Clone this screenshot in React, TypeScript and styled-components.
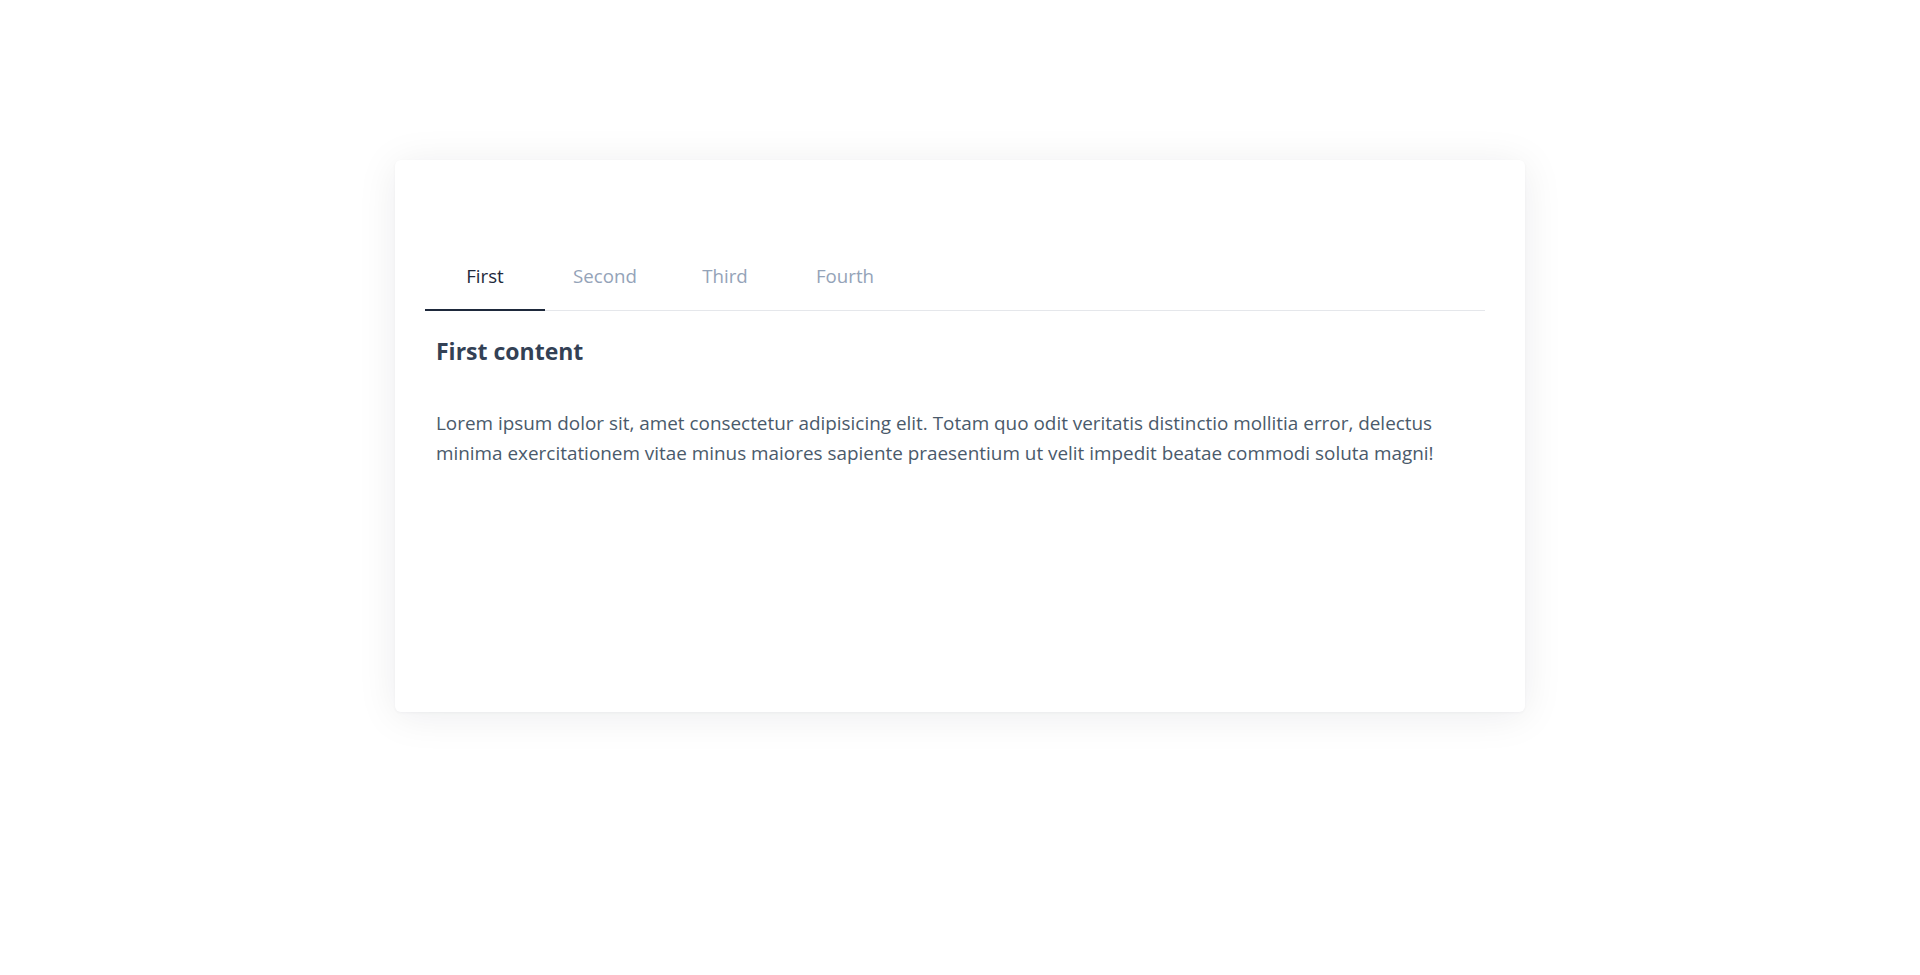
import React, { useState } from "react";
import styled, { createGlobalStyle } from "styled-components";

const GlobalStyle = createGlobalStyle`
  html, body {
    margin: 0;
    padding: 0;
    background: #ffffff;
  }
  body {
    font-family: "Segoe UI", "Open Sans", "Noto Sans", sans-serif;
    -webkit-font-smoothing: antialiased;
  }
  * { box-sizing: border-box; }
`;

const Page = styled.div`
  min-height: 975px;
  padding-top: 160px;
  display: flex;
  justify-content: center;
  align-items: flex-start;
`;

const Card = styled.div`
  width: 1130px;
  height: 552px;
  background: #ffffff;
  border-radius: 6px;
  box-shadow: 0 4px 40px rgba(15, 23, 42, 0.08), 0 1px 3px rgba(15, 23, 42, 0.04);
  padding: 92px 40px 0 30px;
`;

const TabList = styled.div`
  display: flex;
  border-bottom: 1px solid #e5e7eb;
`;

const Tab = styled.button<{ $active: boolean }>`
  width: 120px;
  padding: 12px 0 21px;
  margin-bottom: -1px;
  background: none;
  border: none;
  border-bottom: 2px solid ${(p) => (p.$active ? "#1e293b" : "transparent")};
  font-family: inherit;
  font-size: 18.7px;
  line-height: 24px;
  color: ${(p) => (p.$active ? "#1e293b" : "#94a3b8")};
  cursor: pointer;
  text-align: center;
`;

const Panel = styled.div`
  padding-left: 11px;
  width: 1045px;
`;

const Heading = styled.h2`
  margin: 24px 0 0;
  font-size: 23px;
  line-height: 32px;
  font-weight: 700;
  color: #334155;
`;

const Text = styled.p`
  margin: 41px 0 0;
  font-size: 18.9px;
  line-height: 30px;
  color: #4a5a6b;
`;

const tabs = [
  {
    label: "First",
    title: "First content",
    body:
      "Lorem ipsum dolor sit, amet consectetur adipisicing elit. Totam quo odit veritatis distinctio mollitia error, delectus minima exercitationem vitae minus maiores sapiente praesentium ut velit impedit beatae commodi soluta magni!",
  },
  {
    label: "Second",
    title: "Second content",
    body:
      "Lorem ipsum dolor sit amet consectetur adipisicing elit. Quaerat, voluptatum. Numquam, aliquid ipsam.",
  },
  {
    label: "Third",
    title: "Third content",
    body:
      "Lorem ipsum dolor sit amet consectetur adipisicing elit. Explicabo dolores vero quas temporibus.",
  },
  {
    label: "Fourth",
    title: "Fourth content",
    body:
      "Lorem ipsum dolor sit amet consectetur adipisicing elit. Nihil tempore, sit ratione harum facere.",
  },
];

export default function App() {
  const [active, setActive] = useState(0);
  const current = tabs[active];
  return (
    <>
      <GlobalStyle />
      <Page>
        <Card>
          <TabList>
            {tabs.map((t, i) => (
              <Tab key={t.label} $active={i === active} onClick={() => setActive(i)}>
                {t.label}
              </Tab>
            ))}
          </TabList>
          <Panel>
            <Heading>{current.title}</Heading>
            <Text>{current.body}</Text>
          </Panel>
        </Card>
      </Page>
    </>
  );
}
